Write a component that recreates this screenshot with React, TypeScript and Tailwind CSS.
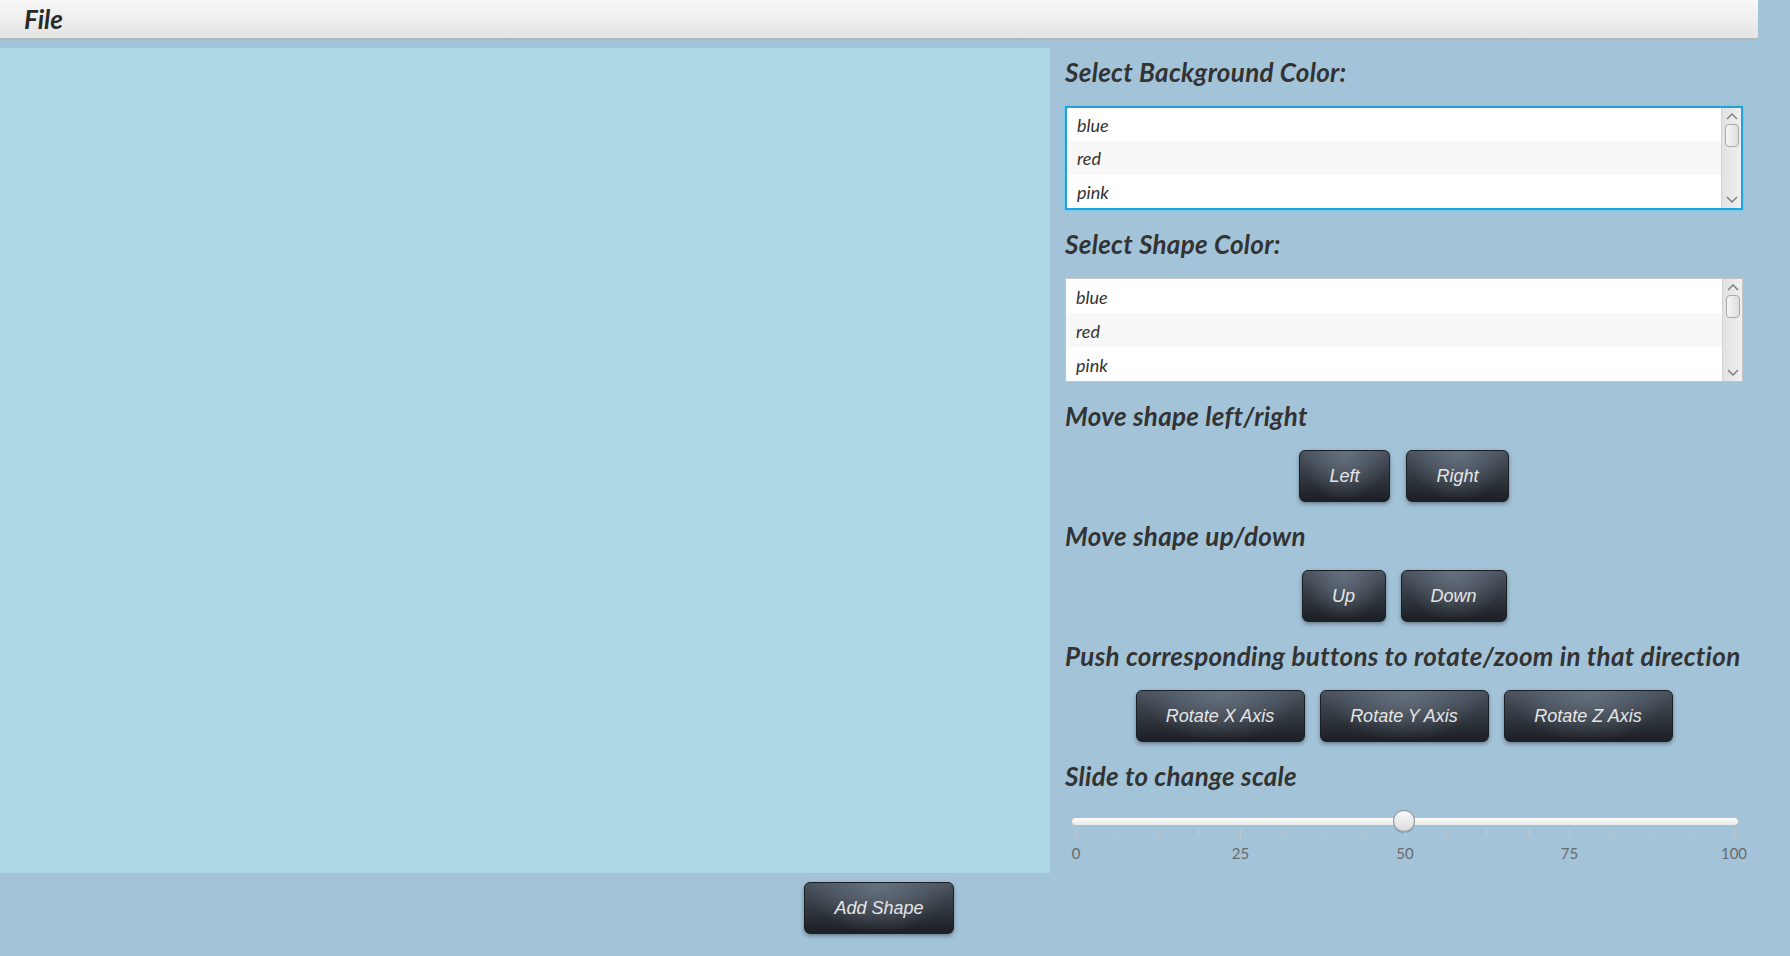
const colors = ["blue", "red", "pink"];

function Chevron({ up }: { up?: boolean }) {
  return (
    <svg width="12" height="8" viewBox="0 0 12 8" className="my-[4px]">
      <polyline
        points={up ? "1,7 6,2 11,7" : "1,1 6,6 11,1"}
        fill="none"
        stroke="#7a7a7a"
        strokeWidth="1.4"
      />
    </svg>
  );
}

function ColorList({ focused }: { focused?: boolean }) {
  return (
    <div
      className={
        "relative flex h-[104px] w-full bg-white " +
        (focused ? "border-2 border-[#1ea3dc] shadow-[0_0_0_1px_#7cc8ea]" : "border border-[#c4c4c4]")
      }
    >
      <div className="flex flex-1 flex-col">
        {colors.map((c, i) => (
          <div
            key={c}
            className={
              "flex h-[34px] items-center pl-[10px] pt-[2px] text-[18px] italic text-[#333] " +
              (i === 1 ? "bg-[#f8f8f8]" : "bg-white")
            }
          >
            {c}
          </div>
        ))}
      </div>
      <div className="flex w-[20px] flex-col items-center border-l border-[#d4d4d4] bg-[linear-gradient(to_right,#e2e2e2,#efefef)]">
        <Chevron up />
        <div className="h-[23px] w-[14px] rounded-[4px] border border-[#a9a9a9] bg-[linear-gradient(to_right,#f6f6f6,#dedede)]" />
        <div className="flex-1" />
        <Chevron />
      </div>
    </div>
  );
}

function DarkButton({ label, w }: { label: string; w: string }) {
  return (
    <button
      className={
        w +
        " h-[52px] rounded-[6px] border border-[#1b1e22] bg-[radial-gradient(ellipse_at_50%_0%,#66717f_0%,rgba(80,90,102,0)_70%),linear-gradient(to_bottom,#4a535e,#1c1f24)] text-[18px] italic text-[#e6e6e6] shadow-[0_2px_4px_rgba(0,0,0,0.35)]"
      }
      style={{ fontFamily: '"Liberation Sans", Arial, sans-serif' }}
    >
      {label}
    </button>
  );
}

function Heading({ children }: { children: string }) {
  return (
    <div className="h-8 text-[26px] font-bold italic leading-8 tracking-[0.3px] text-[#333] whitespace-nowrap">
      {children}
    </div>
  );
}

function Slider() {
  const ticks = Array.from({ length: 17 }, (_, i) => i);
  const labels = [0, 25, 50, 75, 100];
  return (
    <div className="relative mt-[3px] h-[60px] w-full">
      <div className="absolute left-[6px] right-[4px] top-[4px] h-[9px] rounded-full border border-[#bcbcbc] bg-[linear-gradient(to_bottom,#fdfdfd,#e9e9e9)]" />
      <div className="absolute left-[328px] top-[-3px] h-[22px] w-[22px] rounded-full border border-[#8f8f8f] bg-[linear-gradient(to_bottom,#fafafa,#dcdcdc)] shadow-[0_1px_1px_rgba(0,0,0,0.2)]" />
      {ticks.map((t) => (
        <div
          key={t}
          className={"absolute top-[16px] w-px bg-[#c8c8c8] " + (t % 4 === 0 ? "h-[10px]" : "h-[6px]")}
          style={{ left: 11 + t * 41.1 }}
        />
      ))}
      {labels.map((l, i) => (
        <div
          key={l}
          className="absolute top-[32px] w-10 -translate-x-1/2 text-center text-[15px] leading-4 text-[#6a6a6a]"
          style={{ left: 11 + i * 164.5 }}
        >
          {l}
        </div>
      ))}
    </div>
  );
}

export default function App() {
  return (
    <div
      className="h-[956px] w-full overflow-hidden bg-[#a3c3d8]"
      style={{ fontFamily: 'Lato, "Open Sans", sans-serif' }}
    >
      <div className="flex w-[1758px] flex-col">
        <div className="flex h-[40px] items-center border-b-2 border-[#b6b6b6] bg-[linear-gradient(to_bottom,#f8f8f8,#e4e4e4)] pl-[24px]">
          <span className="text-[26px] font-bold italic leading-none text-[#2a2a2a]">File</span>
        </div>
        <div className="mt-[8px] flex">
          <div className="h-[825px] w-[1050px] bg-[#add8e6]" />
          <div className="ml-[15px] flex w-[678px] flex-col gap-[18px] pt-[8px]">
            <Heading>Select Background Color:</Heading>
            <ColorList focused />
            <Heading>Select Shape Color:</Heading>
            <ColorList />
            <Heading>Move shape left/right</Heading>
            <div className="flex justify-center gap-[16px]">
              <DarkButton label="Left" w="w-[91px]" />
              <DarkButton label="Right" w="w-[103px]" />
            </div>
            <Heading>Move shape up/down</Heading>
            <div className="flex justify-center gap-[15px]">
              <DarkButton label="Up" w="w-[84px]" />
              <DarkButton label="Down" w="w-[106px]" />
            </div>
            <Heading>Push corresponding buttons to rotate/zoom in that direction</Heading>
            <div className="flex justify-center gap-[15px]">
              <DarkButton label="Rotate X Axis" w="w-[169px]" />
              <DarkButton label="Rotate Y Axis" w="w-[169px]" />
              <DarkButton label="Rotate Z Axis" w="w-[169px]" />
            </div>
            <Heading>Slide to change scale</Heading>
            <Slider />
          </div>
        </div>
        <div className="flex justify-center pt-[9px]">
          <DarkButton label="Add Shape" w="w-[150px]" />
        </div>
      </div>
    </div>
  );
}
